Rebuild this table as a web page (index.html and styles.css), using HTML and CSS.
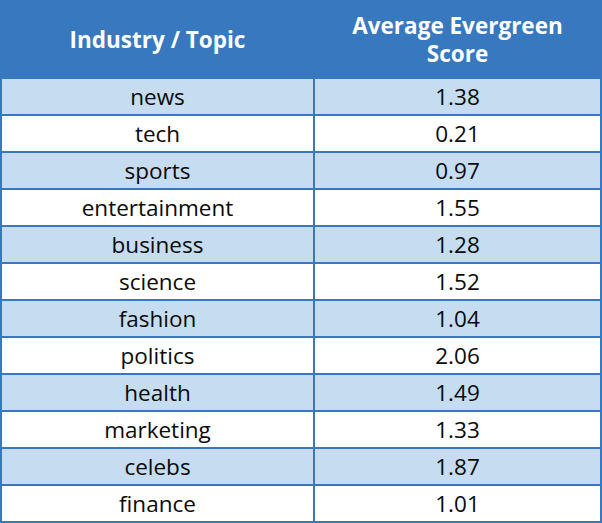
FILE: index.html
```html
<!DOCTYPE html>
<html lang="en">
<head>
<meta charset="utf-8">
<title>Average Evergreen Score by Industry</title>
<link rel="stylesheet" href="styles.css">
</head>
<body>
<table class="scores">
  <colgroup>
    <col class="col-topic">
    <col class="col-score">
  </colgroup>
  <thead>
    <tr>
      <th>Industry / Topic</th>
      <th>Average Evergreen<br>Score</th>
    </tr>
  </thead>
  <tbody>
    <tr><td>news</td><td>1.38</td></tr>
    <tr><td>tech</td><td>0.21</td></tr>
    <tr><td>sports</td><td>0.97</td></tr>
    <tr><td>entertainment</td><td>1.55</td></tr>
    <tr><td>business</td><td>1.28</td></tr>
    <tr><td>science</td><td>1.52</td></tr>
    <tr><td>fashion</td><td>1.04</td></tr>
    <tr><td>politics</td><td>2.06</td></tr>
    <tr><td>health</td><td>1.49</td></tr>
    <tr><td>marketing</td><td>1.33</td></tr>
    <tr><td>celebs</td><td>1.87</td></tr>
    <tr><td>finance</td><td>1.01</td></tr>
  </tbody>
</table>
</body>
</html>
```

FILE: styles.css
```css
html, body {
  margin: 0;
  padding: 0;
  background: #ffffff;
}

.scores {
  width: 602px;
  table-layout: fixed;
  border-collapse: separate;
  border-spacing: 2px;
  background: #3778be;
  font-family: "Open Sans", "Noto Sans", sans-serif;
  color: #0a0a0a;
}

.col-topic { width: 311px; }
.col-score { width: 285px; }

.scores th,
.scores td {
  padding: 0;
  text-align: center;
  vertical-align: middle;
  box-sizing: border-box;
}

.scores th {
  height: 75px;
  background: #3778be;
  color: #ffffff;
  font-weight: 700;
  font-size: 22.5px;
  line-height: 28px;
}

.scores td {
  height: 35px;
  font-size: 22.5px;
  line-height: 26px;
  background: #ffffff;
}

.scores tbody tr:nth-child(odd) td {
  background: #c6dcf0;
}
```
